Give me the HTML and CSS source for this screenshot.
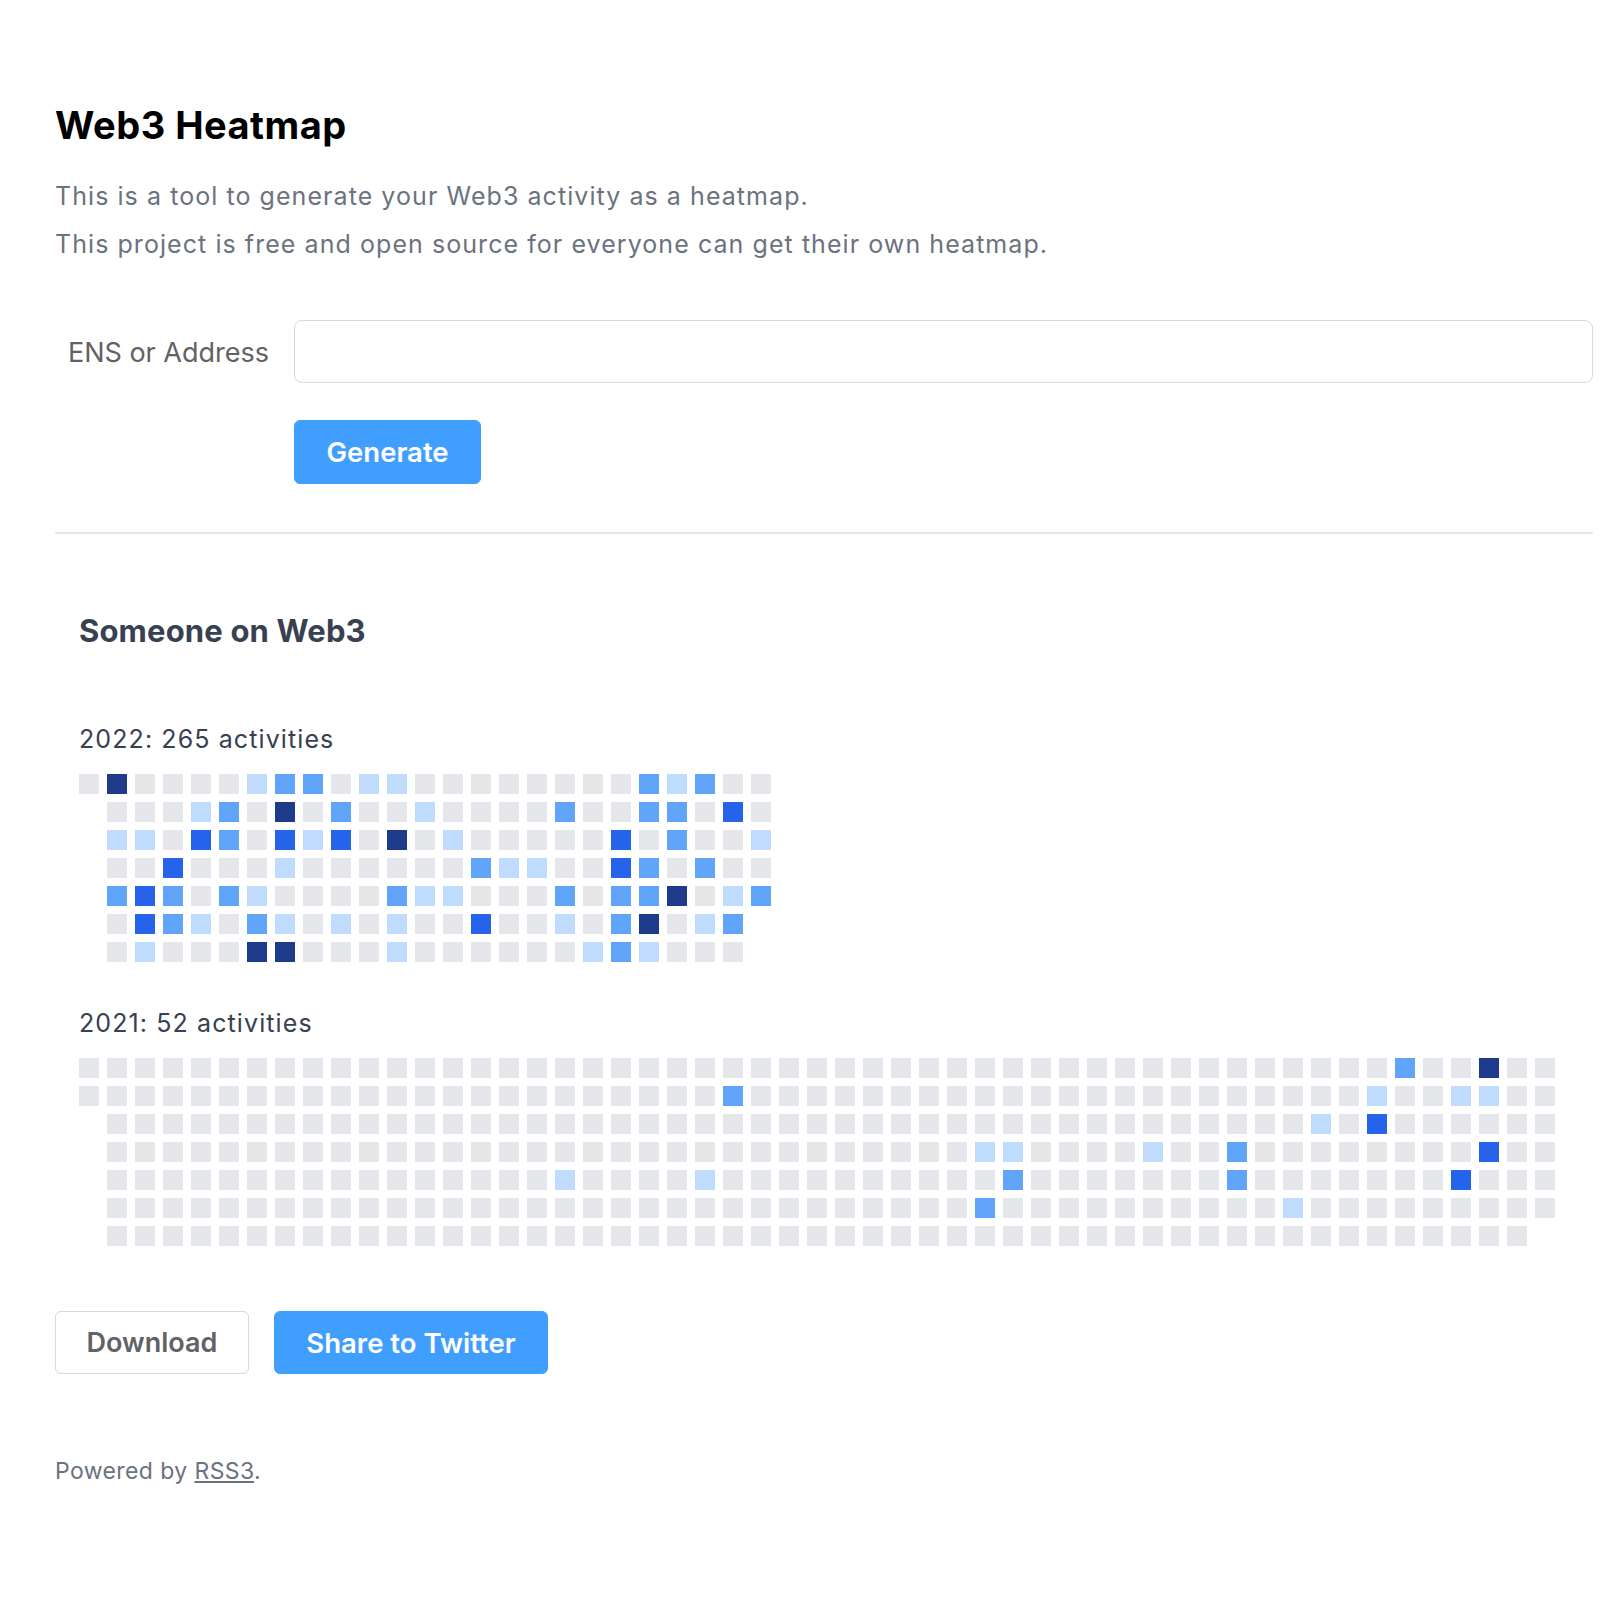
FILE: index.html
```html
<!DOCTYPE html>
<html lang="en">
<head>
<meta charset="utf-8">
<title>Web3 Heatmap</title>
<link rel="stylesheet" href="styles.css">
</head>
<body>
<main class="page">
  <h1 class="title">Web3 Heatmap</h1>
  <div class="intro">
    <p>This is a tool to generate your Web3 activity as a heatmap.</p>
    <p>This project is free and open source for everyone can get their own heatmap.</p>
  </div>

  <form class="form">
    <div class="form-row">
      <label class="form-label" for="addr">ENS or Address</label>
      <input class="form-input" id="addr" type="text">
    </div>
    <div class="form-actions">
      <button type="button" class="btn btn-primary">Generate</button>
    </div>
  </form>

  <hr class="divider">

  <section class="result">
    <h2 class="result-title">Someone on Web3</h2>

    <div class="year-label">2022: 265 activities</div>
    <div class="heatmap cols-25">
<i></i><i class="d"></i><i></i><i></i><i></i><i></i><i class="l"></i><i class="m"></i><i class="m"></i><i></i><i class="l"></i><i class="l"></i><i></i><i></i><i></i><i></i><i></i><i></i><i></i><i></i><i class="m"></i><i class="l"></i><i class="m"></i><i></i><i></i>
<i class="x"></i><i></i><i></i><i></i><i class="l"></i><i class="m"></i><i></i><i class="d"></i><i></i><i class="m"></i><i></i><i></i><i class="l"></i><i></i><i></i><i></i><i></i><i class="m"></i><i></i><i></i><i class="m"></i><i class="m"></i><i></i><i class="s"></i><i></i>
<i class="x"></i><i class="l"></i><i class="l"></i><i></i><i class="s"></i><i class="m"></i><i></i><i class="s"></i><i class="l"></i><i class="s"></i><i></i><i class="d"></i><i></i><i class="l"></i><i></i><i></i><i></i><i></i><i></i><i class="s"></i><i></i><i class="m"></i><i></i><i></i><i class="l"></i>
<i class="x"></i><i></i><i></i><i class="s"></i><i></i><i></i><i></i><i class="l"></i><i></i><i></i><i></i><i></i><i></i><i></i><i class="m"></i><i class="l"></i><i class="l"></i><i></i><i></i><i class="s"></i><i class="m"></i><i></i><i class="m"></i><i></i><i></i>
<i class="x"></i><i class="m"></i><i class="s"></i><i class="m"></i><i></i><i class="m"></i><i class="l"></i><i></i><i></i><i></i><i></i><i class="m"></i><i class="l"></i><i class="l"></i><i></i><i></i><i></i><i class="m"></i><i></i><i class="m"></i><i class="m"></i><i class="d"></i><i></i><i class="l"></i><i class="m"></i>
<i class="x"></i><i></i><i class="s"></i><i class="m"></i><i class="l"></i><i></i><i class="m"></i><i class="l"></i><i></i><i class="l"></i><i></i><i class="l"></i><i></i><i></i><i class="s"></i><i></i><i></i><i class="l"></i><i></i><i class="m"></i><i class="d"></i><i></i><i class="l"></i><i class="m"></i><i class="x"></i>
<i class="x"></i><i></i><i class="l"></i><i></i><i></i><i></i><i class="d"></i><i class="d"></i><i></i><i></i><i></i><i class="l"></i><i></i><i></i><i></i><i></i><i></i><i></i><i class="l"></i><i class="m"></i><i class="l"></i><i></i><i></i><i></i>
    </div>

    <div class="year-label year-label-next">2021: 52 activities</div>
    <div class="heatmap cols-53">
<!-- row 0 -->
<i></i><i></i><i></i><i></i><i></i><i></i><i></i><i></i><i></i><i></i>
<i></i><i></i><i></i><i></i><i></i><i></i><i></i><i></i><i></i><i></i>
<i></i><i></i><i></i><i></i><i></i><i></i><i></i><i></i><i></i><i></i>
<i></i><i></i><i></i><i></i><i></i><i></i><i></i><i></i><i></i><i></i>
<i></i><i></i><i></i><i></i><i></i><i></i><i></i>
<i class="m"></i><i></i><i></i><i class="d"></i><i></i><i></i>
<!-- row 1 -->
<i></i><i></i><i></i><i></i><i></i><i></i><i></i><i></i><i></i><i></i>
<i></i><i></i><i></i><i></i><i></i><i></i><i></i><i></i><i></i><i></i>
<i></i><i></i><i></i>
<i class="m"></i>
<i></i><i></i><i></i><i></i><i></i><i></i><i></i><i></i><i></i><i></i>
<i></i><i></i><i></i><i></i><i></i><i></i><i></i><i></i><i></i><i></i>
<i></i><i></i>
<i class="l"></i><i></i><i></i><i class="l"></i><i class="l"></i><i></i><i></i>
<!-- row 2 -->
<i class="x"></i>
<i></i><i></i><i></i><i></i><i></i><i></i><i></i><i></i><i></i><i></i>
<i></i><i></i><i></i><i></i><i></i><i></i><i></i><i></i><i></i><i></i>
<i></i><i></i><i></i><i></i><i></i><i></i><i></i><i></i><i></i><i></i>
<i></i><i></i><i></i><i></i><i></i><i></i><i></i><i></i><i></i><i></i>
<i></i><i></i><i></i>
<i class="l"></i><i></i><i class="s"></i>
<i></i><i></i><i></i><i></i><i></i><i></i>
<!-- row 3 -->
<i class="x"></i>
<i></i><i></i><i></i><i></i><i></i><i></i><i></i><i></i><i></i><i></i>
<i></i><i></i><i></i><i></i><i></i><i></i><i></i><i></i><i></i><i></i>
<i></i><i></i><i></i><i></i><i></i><i></i><i></i><i></i><i></i><i></i>
<i></i>
<i class="l"></i><i class="l"></i><i></i><i></i><i></i><i></i><i class="l"></i><i></i><i></i><i class="m"></i>
<i></i><i></i><i></i><i></i><i></i><i></i><i></i><i></i>
<i class="s"></i><i></i><i></i>
<!-- row 4 -->
<i class="x"></i>
<i></i><i></i><i></i><i></i><i></i><i></i><i></i><i></i><i></i><i></i>
<i></i><i></i><i></i><i></i><i></i><i></i>
<i class="l"></i><i></i><i></i><i></i><i></i><i class="l"></i>
<i></i><i></i><i></i><i></i><i></i><i></i><i></i><i></i><i></i><i></i>
<i class="m"></i><i></i><i></i><i></i><i></i><i></i><i></i><i></i>
<i class="m"></i><i></i><i></i><i></i><i></i><i></i><i></i><i></i>
<i class="s"></i><i></i><i></i><i></i>
<!-- row 5 -->
<i class="x"></i>
<i></i><i></i><i></i><i></i><i></i><i></i><i></i><i></i><i></i><i></i>
<i></i><i></i><i></i><i></i><i></i><i></i><i></i><i></i><i></i><i></i>
<i></i><i></i><i></i><i></i><i></i><i></i><i></i><i></i><i></i><i></i>
<i></i>
<i class="m"></i>
<i></i><i></i><i></i><i></i><i></i><i></i><i></i><i></i><i></i><i></i>
<i class="l"></i>
<i></i><i></i><i></i><i></i><i></i><i></i><i></i><i></i><i></i>
<!-- row 6 -->
<i class="x"></i>
<i></i><i></i><i></i><i></i><i></i><i></i><i></i><i></i><i></i><i></i>
<i></i><i></i><i></i><i></i><i></i><i></i><i></i><i></i><i></i><i></i>
<i></i><i></i><i></i><i></i><i></i><i></i><i></i><i></i><i></i><i></i>
<i></i><i></i><i></i><i></i><i></i><i></i><i></i><i></i><i></i><i></i>
<i></i><i></i><i></i><i></i><i></i><i></i><i></i><i></i><i></i><i></i>
<i></i>
    </div>
  </section>

  <div class="share-actions">
    <button type="button" class="btn btn-plain">Download</button>
    <button type="button" class="btn btn-primary">Share to Twitter</button>
  </div>

  <footer class="footer">Powered by <a href="#">RSS3</a>.</footer>
</main>
</body>
</html>
```

FILE: styles.css
```css
* {
  box-sizing: border-box;
}

body {
  margin: 0;
  background: #ffffff;
  font-family: Inter, "Noto Sans", "Liberation Sans", sans-serif;
}

.page {
  padding: 102px 15px 100px 55px;
}

.title {
  margin: 0;
  font-size: 38px;
  line-height: 46px;
  font-weight: 700;
  letter-spacing: 0.5px;
  color: #000000;
}

.intro {
  margin-top: 25px;
}

.intro p {
  margin: 0;
  font-size: 25px;
  line-height: 47.5px;
  letter-spacing: 1.06px;
  color: #6b7280;
}

.form {
  margin: 52px 0 0;
}

.form-row {
  display: flex;
  align-items: center;
}

.form-label {
  flex: none;
  width: 239px;
  padding: 2px 25px 0 0;
  text-align: right;
  font-size: 27px;
  color: #606266;
}

.form-input {
  flex: 1;
  height: 63px;
  margin: 0;
  padding: 0 16px;
  border: 1px solid #d6d9df;
  border-radius: 8px;
  font: 25px Inter, sans-serif;
  outline: none;
}

.form-actions {
  margin-top: 37px;
  padding-left: 239px;
}

.btn {
  display: inline-flex;
  align-items: center;
  justify-content: center;
  height: 64px;
  padding: 0 31.5px;
  border-radius: 6px;
  font-family: Inter, "Noto Sans", sans-serif;
  font-size: 27.5px;
  font-weight: 600;
  cursor: pointer;
}

.btn-primary {
  background: #409eff;
  border: 1px solid #409eff;
  color: #ffffff;
}

.btn-plain {
  background: #ffffff;
  border: 1px solid #d6d9df;
  color: #606266;
  font-size: 27px;
  padding: 0 30.5px;
}

.divider {
  margin: 48px 0 0;
  height: 2px;
  border: 0;
  background: #e4e7ed;
}

.result {
  padding-left: 24px;
}

.result-title {
  margin: 77px 0 0;
  font-size: 31px;
  line-height: 40px;
  font-weight: 700;
  letter-spacing: 0.15px;
  color: #374151;
}

.year-label {
  margin-top: 71px;
  font-size: 25px;
  line-height: 35px;
  letter-spacing: 1.1px;
  color: #374151;
}

.year-label-next {
  margin-top: 44px;
}

.heatmap {
  display: grid;
  grid-auto-rows: 20px;
  gap: 8px;
  margin-top: 17px;
}

.cols-25 {
  grid-template-columns: repeat(25, 20px);
}

.cols-53 {
  grid-template-columns: repeat(53, 20px);
}

.heatmap i {
  display: block;
  background: #e5e7eb;
}

.heatmap i.l {
  background: #bfdbfe;
}

.heatmap i.m {
  background: #60a5fa;
}

.heatmap i.s {
  background: #2563eb;
}

.heatmap i.d {
  background: #1e3a8a;
}

.heatmap i.x {
  visibility: hidden;
}

.share-actions {
  display: flex;
  gap: 25px;
  margin-top: 65px;
}

.share-actions .btn {
  height: 63px;
}

.footer {
  margin-top: 82px;
  font-size: 23px;
  line-height: 30px;
  letter-spacing: 0.4px;
  color: #6b7280;
}

.footer a {
  color: inherit;
  text-decoration: underline;
}
```
